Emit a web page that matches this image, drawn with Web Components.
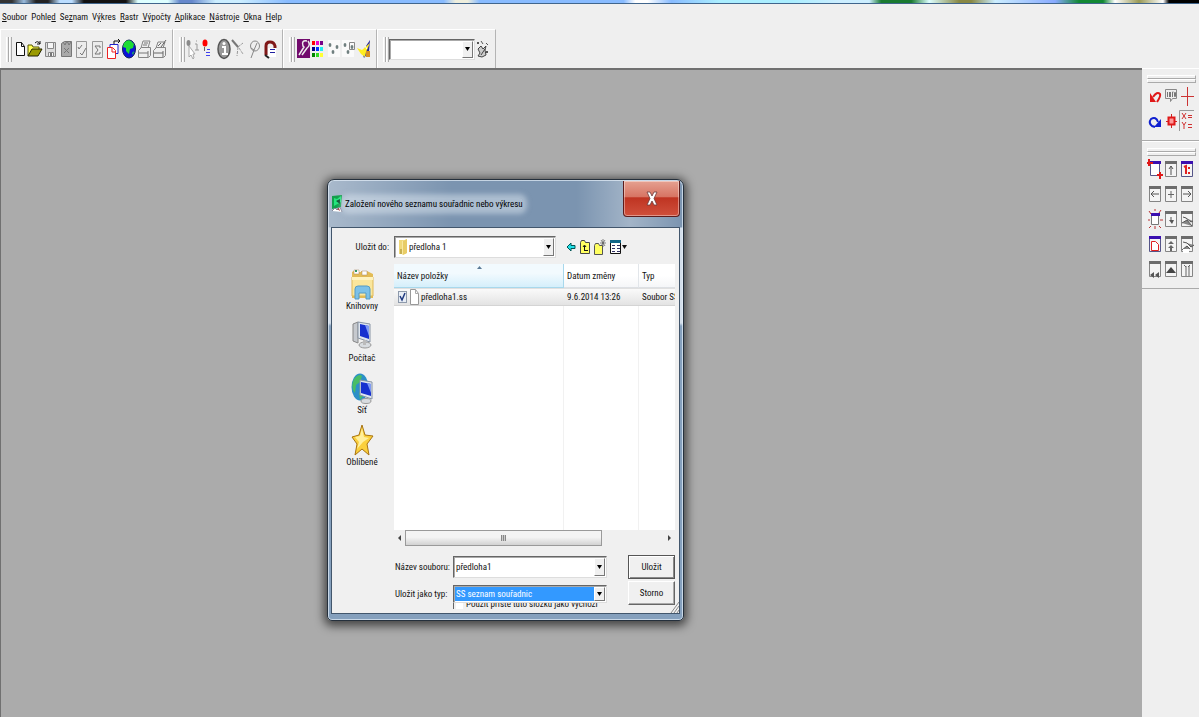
<!DOCTYPE html>
<html lang="cs">
<head>
<meta charset="utf-8">
<title>Souřadnice</title>
<style>
html,body{margin:0;height:100%}
body{font:9px/12px "Roboto Condensed","Liberation Sans",sans-serif;color:#111;background:#efefef}
</style>
</head>
<body>
<app-window></app-window>
<script>
const define=(name,html,init)=>customElements.define(name,class extends HTMLElement{
  connectedCallback(){
    if(this.shadowRoot)return;
    const t=document.createElement('template');
    t.innerHTML=typeof html==='function'?html(this):html;
    this.attachShadow({mode:'open'}).append(t.content.cloneNode(true));
    if(init)init(this);
  }
});

const page=(c,b='')=>`<path d="M2.500 3.500h10v16h-10z" fill="#ececec" stroke="${c}"/>${b}`;
const win=(b,c='#858585',t='#6c6c6c')=>`<path d="M2.500 3.500h11v15h-11z" fill="#f4f4f4" stroke="${c}"/><path d="M2 3h12v3H2z" fill="${t}"/>${b}`;
const dots='<g fill="#6f7f7f"><ellipse cx="4" cy="7" rx="1.400" ry="2"/><ellipse cx="11" cy="9" rx="1.400" ry="2"/><ellipse cx="7" cy="14" rx="1.400" ry="2"/></g>';
const ICONS={
  newdoc:'<path d="M4.500 4.500h5l3 4v9h-8z" fill="#fff" stroke="#111"/><path d="M9.500 4.500v4h3" fill="none" stroke="#111"/>',
  open:'<path d="M1 18V7h4l1 2h6v3" fill="#ffff55" stroke="#555500"/><path d="M1 18l4-7h10l-4 7z" fill="#9a9a00" stroke="#222200"/><path d="M8 5q3-3 5 1m0-3v3h-3" fill="none" stroke="#111"/>',
  save:'<path d="M2.500 4.500h10v14h-10z" fill="#ddd" stroke="#888"/><path d="M4.500 4.500h6v6h-6zM5.500 14.500h5v4h-5z" fill="#f5f5f5" stroke="#888"/><path d="M7 15h2v3H7z" fill="#777"/>',
  clip:'<path d="M2.500 5.500l3-2h7v15h-10z" fill="#aaa" stroke="#777"/><path d="M4 4l2 3 2-4 2 4 2-3M5 10l5 5m0-5l-5 5" fill="none" stroke="#777"/>',
  check:page('#999','<path d="M4 9l1 2 3-4M6 15l2 2 4-7" fill="none" stroke="#777"/>'),
  sigma:page('#999','<path d="M10 10V8H5l3 4-3 4h5v-2" fill="none" stroke="#777"/>'),
  copy:'<path d="M5 6.500h8v9H5z" fill="#fff" stroke="#2222cc"/><path d="M2.500 9.500h5l3 3v8h-8z" fill="#fff" stroke="#e22"/><path d="M7 10v4h3" fill="none" stroke="#e22"/><path d="M9 6V3h6m-2-2l2 2-2 2" fill="none" stroke="#111"/>',
  globe:'<ellipse cx="8" cy="11" rx="6.500" ry="9" fill="#0b12d8" stroke="#125"/><path d="M3 5q3-4 7-2l3 3-1 4-3 1-1 5-3-3v-3L2 9z" fill="#1edb35"/><path d="M11 15l2-2-1 4z" fill="#1edb35"/>',
  print:'<path d="M4 10l2-7h7l-2 7M1.500 12.500l3-3h9v8l-2 2h-10z" fill="#eee" stroke="#858585"/><path d="M7 5h4m-5 2h4M2 15h9m0-2v6" fill="none" stroke="#777"/>',
  print2:'<path d="M4 10l2-6h7l-2 6M1.500 12.500l3-3h9v8l-2 2h-10z" fill="#eee" stroke="#858585"/><path d="M6 8l3-3m0 4l5-7M2 15h9m0-2v6" fill="none" stroke="#666"/>',
  pick:'<ellipse cx="3.500" cy="5" rx="2" ry="3" fill="#8a8a8a"/><path d="M4 8v11l2-2 2 4 1-1-1-4h2z" fill="#fff" stroke="#aaa"/><path d="M10 6h2v6m-2 0h4M11 3h1" fill="none" stroke="#999"/>',
  reddot:'<ellipse cx="5" cy="5" rx="2.500" ry="3.500" fill="#f00"/><path d="M4.500 9v4" stroke="#666"/><path d="M7 11.500h3M6 14.500h4M6 17.500h4" stroke="#4040ee"/>',
  info:'<ellipse cx="8" cy="11" rx="6" ry="9.500" fill="#999" stroke="#555" stroke-width="1.500"/><path d="M6 9h3v7m-3 0h6" fill="none" stroke="#fff" stroke-width="2"/><circle cx="8" cy="5.500" r="1.500" fill="#fff"/>',
  net:'<path d="M2 3l5 6 5-4M7 9l-1 9M8 10l4 6" fill="none" stroke="#999" stroke-dasharray="3 1"/><path d="M1 2l6 7" stroke="#777" stroke-width="2"/>',
  lasso:'<ellipse cx="8" cy="8" rx="4.500" ry="5" fill="#eee" stroke="#888"/><path d="M4 10l3 2-3 8M7 12l3-7" fill="none" stroke="#888"/>',
  magnet:'<path d="M4 17V8q0-4 4-4t5 4v2" fill="none" stroke="#801818" stroke-width="3"/><path d="M6 10h8v9H6z" fill="#fff"/><path d="M8 11.500h5M8 14.500h5" stroke="#2020a0"/><path d="M3 17l4 3" stroke="#222" stroke-width="2"/>',
  wrench:'<path d="M2 1h13v19H2z" fill="#720b6d"/><path d="M12 3q-6-1-4 5l1 1-5 8m3 0l5-7q4-3 1-7" fill="none" stroke="#eee" stroke-width="1.500"/>',
  grid:[['#f00','#e0c','#708'],['#008','#03f','#2ee'],['#080','#3d2','#ff3']].map((r,j)=>r.map((c,i)=>`<path d="M${2+i*4} ${3+j*6}h3v4h-3z" fill="${c}"/>`).join('')).join(''),
  pts:'<path d="M2 2h12v17H2z" fill="#fafafa"/>'+dots,
  pts2:'<path d="M1 2h12v17H1z" fill="#fafafa"/>'+dots+'<path d="M8.500 4.500h5v7h-5z" fill="none" stroke="#888"/>',
  feather:'<path d="M14 2l-1 12-5 6-2-6z" fill="#2a2a9c"/><path d="M1 10l5 2 8-7-4 9-1 5-4-3z" fill="#ffee20"/><path d="M10 13h4v6h-4z" fill="#d89020"/><path d="M9 8l2 3" stroke="#fff"/>',
  gear:'<path d="M2 4l2 2m0-2l-2 2M11 13l2 2m0-2l-2 2M6 3l2 3M11 5l2 2" stroke="#555"/><path d="M3 11l3-3 2 3 3-3-1 4 1 5-4 2-4-1 2-3zM6 17l4-6" fill="#ccc" stroke="#444"/>',
  undo:'<path d="M6 12q4-6 7-3 1 2-3 8" fill="none" stroke="#e01818" stroke-width="2"/><path d="M3 8v9h6z" fill="#e01818"/>',
  redo:'<path d="M11 12q-2-6-7-3-3 4 1 7l3 1" fill="none" stroke="#1020d0" stroke-width="2"/><path d="M14 9v8H7z" fill="#1020d0"/>',
  bubble:'<path d="M2.500 4.500h11v9h-4l-2 3v-3h-5z" fill="#eee" stroke="#888"/><path d="M4.500 7v5M6.500 12V7l1 5V7M9.500 12V7h1M9 9h1M11.500 7.500h1v4h-1z" fill="none" stroke="#777"/>',
  cross:'<path d="M2 11.500h13M8.500 2v19" stroke="#c33"/>',
  target:'<path d="M3 11.500h11M8.500 4v14" stroke="#c22"/><path d="M5.500 7.500h6v7h-6z" fill="#f99" stroke="#e01818" stroke-width="2"/>',
  xy:'<path d="M.5 21V.5H15" fill="none" stroke="#999"/><path d="M3 3l4 6m0-6l-4 6M9 5.500h4M9 7.500h4M3 12l2 3 2-3M5 15v4M9 14.500h4M9 17.500h4" fill="none" stroke="#d03030"/>',
  zoomwin:'<path d="M3.500 4.500h9v13h-9z" fill="#fff" stroke="#558"/><path d="M3 3h11v3H3z" fill="#3b10b0"/><path d="M2 1v7M0 5h6M13 14v7M10 17h6" stroke="#e01818" stroke-width="2"/>',
  up:win('<path d="M8 8v9M6 11l2-3 2 3" stroke="#555" fill="none"/>'),
  one:win('<path d="M5 9l2-1v8M10 9v2M10 14v2" fill="none" stroke="#e02020" stroke-width="2"/>','#558','#3b10b0'),
  left:win('<path d="M4 11h8M7 8l-3 3 3 3" stroke="#555" fill="none"/>'),
  plus:win('<path d="M5 11.500h6M8 8v7" stroke="#666"/>'),
  right:win('<path d="M4 11h8M9 8l3 3-3 3" stroke="#555" fill="none"/>'),
  sun:'<path d="M4.500 7.500h7v9h-7z" fill="#fff" stroke="#777"/><path d="M4 5h9v3H4z" fill="#3b10b0"/><path d="M2 3l2 3M14 2l-2 3M1 12h2M13 12h3M8 1v2M8 18v3M2 20l2-2M14 20l-2-2" stroke="#b33"/>',
  down:win('<path d="M8 9v4" stroke="#555"/><path d="M6 12h5l-2 4z" fill="#555"/>'),
  hand:win('<path d="M4 9l3 1 5 4 2-1M3 15l5-3 5 6" fill="#888" stroke="#555"/>'),
  redpage:win('<path d="M4.500 8.500h4l3 3v6h-7z" fill="#fff" stroke="#e02020"/>','#558','#3b10b0'),
  tree:win('<path d="M5 11l3-3 3 3zM5 15l3-3 3 3zM7 15h2v3H7z" fill="#666"/>'),
  hand2:win('<path d="M4 9l4 1 4 4 3-2M3 17l5-4 3 3" fill="#888" stroke="#555"/><path d="M4 16h6v4H4z" fill="#fff"/>'),
  rew:win('<path d="M3 17l4-3v6zM8 17l4-3v6z" fill="#555"/>'),
  tri:win('<path d="M3 15l5-6 5 6z" fill="#444"/>'),
  gift:win('<path d="M7 8v10M10 8v10M5 7l2 2M11 7l-2 2" stroke="#666"/>'),
  title:'<path d="M1 2l10-1-1 12-9 2z" fill="#12a04c"/><path d="M3 4l3 1 4-3v6l-7 4z" fill="#25e67d"/><path d="M5 7l4-2v5z" fill="#0b5030"/><path d="M1 17l3-3 2 2 3-3 2 5" fill="#fff" stroke="#889"/><path d="M6 15l2-1 1 3z" fill="#a33"/>',
  folder:'<path d="M1 2h7v14H1z" fill="#f0d878"/><path d="M4 3l5-2v14l-5 2z" fill="#f8e8a0"/><path d="M5 3l4-2v14l-4 2z" fill="#e8cc66"/><path d="M2 11h2v5H2z" fill="#c8b050"/>',
  file:'<path d="M.5.500h5l3 4v11h-8z" fill="#fff" stroke="#999"/><path d="M5.500.500v4h3" fill="none" stroke="#aaa"/>',
  back:'<path d="M1 8l4-4v2.500h4v3H5V12z" fill="#20e0e8" stroke="#055"/>',
  updir:'<path d="M.5 3.500l1-2h3l1 2h4v11h-9z" fill="#ffff60" stroke="#444"/><path d="M4.500 12V7M3 8l1.500-2L6 8M4 11.500h4" fill="none" stroke="#111"/>',
  newdir:'<path d="M.5 6.500l1-2h3l1 2h3v9h-8z" fill="#ffff60" stroke="#555"/><path d="M9 0v8M6 4h6M7 1l4 6M11 1l-4 6" stroke="#555" stroke-width=".7"/>',
  views:'<path d="M.5 1.500h10v13h-10z" fill="#fff" stroke="#111"/><path d="M0 1h11v3H0z" fill="#168"/><path d="M2 6.500h3M7 6.500h3M2 9.500h3M7 9.500h3M2 12.500h3M7 12.500h3" stroke="#336"/><path d="M12 6h5l-2.500 4z" fill="#111"/>',
  libs:'<path d="M1 4q3-3 6 0h3V3h6l6 3v24H1z" fill="#e3bc55"/><path d="M3 2h5v4H3zM11 3h5v4h-5z" fill="#fff" stroke="#a86" stroke-width=".5"/><path d="M4 2h2v2H4z" fill="#396"/><path d="M1 9h21v19H1z" fill="#fae69c" stroke="#dfb959"/><path d="M1 9h21v3H1z" fill="#fff3be"/><path d="M4 31V21q0-3 3-3h9q3 0 3 3v10h-4v-6H8v6z" fill="#7cc1e8" stroke="#559bc5"/>',
  pc:'<path d="M2 4l5-2v21l-5-2z" fill="#c6c9ce" stroke="#888"/><path d="M7 2l12 2v18L7 18z" fill="#dfe6ef" stroke="#8894a4"/><path d="M9 4l9 2v13l-9-3z" fill="#1730cf"/><path d="M14 5l4 1v10z" fill="#7f9bf5"/><ellipse cx="14" cy="25" rx="6" ry="3" fill="#d8dce0" stroke="#999"/><path d="M12 20h3v5h-3z" fill="#bbb"/>',
  lan:'<ellipse cx="9" cy="15" rx="8.500" ry="13.500" fill="#2c90c8"/><path d="M3 7q5-6 8-3l-2 6-4 3-1 8q-5-6-1-14zM8 20l4 4-3 4z" fill="#48bd66"/><path d="M9 8l12 2v17L9 23z" fill="#dfe6ef" stroke="#8894a4"/><path d="M10 10l10 2v12l-10-3z" fill="#1730cf"/><path d="M16 11l4 1v9z" fill="#7f9bf5"/><ellipse cx="15" cy="29" rx="5" ry="2.500" fill="#d8dce0" stroke="#999"/>',
  star:'<path d="M11 1l3 10 8 1-6 8 2 11-7-6-7 6 2-11-5-7 7-2z" fill="#fbd03c" stroke="#a87412"/><path d="M11 4l2 9 5 1-6 4-6 7 2-7-4-5 5-1z" fill="#ffef9c"/>'
};
const SIZE={title:[12,20],folder:[10,18],file:[9,16],back:[10,16],updir:[10,16],newdir:[12,16],views:[18,16],libs:[23,32],pc:[23,32],lan:[23,32],star:[23,32]};

define('win-icon',el=>{
  const n=el.getAttribute('name'),[w,h]=SIZE[n]||[16,22];
  return `<style>:host{display:block;flex:none}svg{display:block}</style><svg width="${w}" height="${h}" viewBox="0 0 ${w} ${h}" aria-hidden="true">${ICONS[n]}</svg>`;
});

define('icon-button',el=>`<style>
:host{display:flex;justify-content:center;align-items:center;min-width:0}
button{all:unset;display:block;cursor:default}
</style><button type="button" aria-label="${el.getAttribute('icon')}"><win-icon name="${el.getAttribute('icon')}"></win-icon></button>`);

define('menu-bar',`<style>
:host{display:block}
nav{display:flex;gap:4px;height:25px;align-items:center;padding-left:2px}
button{all:unset;cursor:default}
</style><nav>${['<u>S</u>oubor','Pohle<u>d</u>','Se<u>z</u>nam','V<u>ý</u>kres','<u>R</u>astr','<u>V</u>ýpočty','<u>A</u>plikace','<u>N</u>ástroje','<u>O</u>kna','<u>H</u>elp'].map(t=>`<button type="button">${t}</button>`).join('')}</nav>`);

define('tool-group',`<style>
:host{display:flex;align-items:center;box-sizing:border-box;height:39px;padding:0 4px 0 5px;border-top:1px solid #fff;border-left:1px solid #fff;border-right:1px solid #b4b4b4}
i{width:1px;height:25px;border-left:1px solid #fff;border-right:1px solid #aaa;flex:none}
div{flex:1;display:grid;grid-auto-flow:column;grid-auto-columns:minmax(0,1fr);align-items:center}
:host([field]) div{grid-template-columns:minmax(0,1fr) 16px}
</style><i></i><i></i><div><slot></slot></div>`);

/* One labelled field: a drop-down, or with "edit" an editable combo. */
define('win-field',el=>{
  const v=el.getAttribute('value'),l=el.getAttribute('label'),ic=el.getAttribute('icon'),edit=el.hasAttribute('edit'),bare=el.hasAttribute('nolabel');
  const a=bare?`aria-label="${l}"`:'';
  return `<style>
:host{display:flex;align-items:center;min-width:0}
label{flex:none;width:var(--label,0);box-sizing:border-box;text-align:var(--align,left);padding-right:var(--gap,0);white-space:nowrap}
.box{flex:1;min-width:0;display:flex;align-items:stretch;box-sizing:border-box;height:var(--h,22px);background:#fff;border:1px solid;border-color:#666 #ddd #ddd #666;box-shadow:inset 1px 1px #aaa;padding:1px}
win-icon{align-self:center;margin-left:2px}
select,input{appearance:none;flex:1;min-width:0;border:0;outline:0;margin:0;border-radius:0;padding:0 0 0 1px;font:inherit;color:var(--ink,#111);background:var(--fill,transparent)}
.arrow{flex:none;width:9px;display:flex;align-items:center;justify-content:center;background:#f0f0f0;border:1px solid;border-color:#fff #777 #777 #fff;pointer-events:none}
</style>${bare?'':`<label for="c">${l}</label>`}<div class="box">${ic?`<win-icon name="${ic}"></win-icon>`:''}${edit?`<input id="c" ${a} value="${v}">`:`<select id="c" ${a}><option>${v}</option></select>`}<span class="arrow"><svg width="5" height="4" viewBox="0 0 5 4"><path d="M0 0h5L2.500 4z" fill="#000"/></svg></span></div>`;
});

define('push-button',`<style>
:host{display:block}
button{display:block;width:100%;height:24px;font:inherit;color:inherit;padding:0;border-radius:0;background:#f0f0f0;border:1px solid;border-color:#fff #666 #666 #fff;box-shadow:inset -1px -1px #aaa}
:host([default]) button{border-color:#555;box-shadow:inset 1px 1px #fff,inset -1px -1px #888}
</style><button type="button"><slot></slot></button>`);

define('dock-group',`<style>
:host{display:block;padding:6px 3px 7px 5px;border-top:1px solid #fff;border-bottom:1px solid #aaa}
i{display:block;height:2px;border:1px solid;border-color:#fff #aaa #aaa #fff}
div{display:grid;grid-template-columns:repeat(3,16px);grid-auto-rows:25px}
</style><i></i><i></i><div><slot></slot></div>`);

const btns=s=>s.split(' ').map(n=>`<icon-button icon="${n}"></icon-button>`).join('');

define('place-item',el=>`<style>
:host{display:block}
button{all:unset;display:flex;flex-direction:column;align-items:center;width:100%;height:52px;cursor:default}
</style><button type="button"><win-icon name="${el.getAttribute('icon')}"></win-icon><span><slot></slot></span></button>`);

define('file-list',`<style>
:host{display:flex;flex-direction:column;min-width:0;height:282px}
.view{flex:1;overflow:hidden;background:linear-gradient(90deg,transparent 169px,#f1f1f1 169px 170px,transparent 170px 244px,#f1f1f1 244px 245px,transparent 245px) #fff}
table{border-collapse:separate;border-spacing:0;table-layout:fixed;width:100%}
th,td{padding:0 3px;font-weight:400;text-align:left;white-space:nowrap;overflow:hidden}
th{height:24px;border-right:1px solid #e2e6ea;border-bottom:1px solid #dde0e4;background:linear-gradient(#fff 50%,#f5f6f8);position:relative;box-sizing:border-box}
th.sorted{background:linear-gradient(#f2fafe 40%,#d5effb);border-color:#a8d8ec}
th svg{position:absolute;top:2px;left:83px}
th:last-child,td:last-child{padding-right:0;border-right:0}
td{height:16px;border-top:1px solid #e0e0e0;border-bottom:1px solid #d4d4d4;background:linear-gradient(#fafafa,#e3e3e3)}
.name{display:flex;align-items:center;gap:2px;padding-left:1px}
input{appearance:none;flex:none;margin:0 1px 0 0;width:9px;height:12px;border:1px solid #8e9aab;background:#e8eef6 url("data:image/svg+xml,%3Csvg xmlns='http://www.w3.org/2000/svg' viewBox='0 0 7 10'%3E%3Cpath d='M1 4l2 4 3-7' fill='none' stroke='%23203a80' stroke-width='1.500'/%3E%3C/svg%3E") center/contain no-repeat}
.bar{display:flex;height:16px;align-items:center;background:#f0f0f0}
.bar svg{flex:none;margin:0 3px}
.track{flex:1;display:flex;height:16px}
.thumb{flex:0 0 76%;box-sizing:border-box;border:1px solid #9a9a9a;background:linear-gradient(#f4f4f4 45%,#d2d2d2);display:flex;align-items:center;justify-content:center}
.thumb:after{content:"";width:5px;height:6px;background:repeating-linear-gradient(90deg,#888 0 1px,#ccc 1px 2px)}
</style>
<div class="view"><table>
<colgroup><col style="width:170px"><col style="width:75px"><col></colgroup>
<thead><tr><th class="sorted">Název položky<svg width="5" height="3" viewBox="0 0 5 3"><path d="M0 3L2.500 0 5 3z" fill="#5a7a96"/></svg></th><th>Datum změny</th><th>Typ</th></tr></thead>
<tbody>
<tr><td><span class="name"><input type="checkbox" id="f1" checked><win-icon name="file"></win-icon><label for="f1">předloha1.ss</label></span></td><td>9.6.2014 13:26</td><td>Soubor SS</td></tr></tbody>
</table></div>
<div class="bar"><svg width="5" height="6" viewBox="0 0 5 6"><path d="M4 0v6L1 3z" fill="#444"/></svg><div class="track"><div class="thumb"></div></div><svg width="5" height="6" viewBox="0 0 5 6"><path d="M1 0v6l3-3z" fill="#444"/></svg></div>`);

define('save-dialog',`<style>
:host{display:block;box-sizing:border-box;width:357px;border:1px solid #25303c;border-radius:7px 7px 5px 5px;padding:0 3px 6px;
background:linear-gradient(90deg,rgba(255,255,255,.35),transparent 35% 70%,rgba(255,255,255,.3) 85%,transparent) 0 0/100% 48px no-repeat,linear-gradient(#7b94b0 0 47px,#d3deea 48px 143px,#85a0bd 146px);
box-shadow:inset 0 0 0 1px rgba(230,240,250,.7),0 2px 10px 3px rgba(0,0,0,.6)}
header{display:flex;height:47px;align-items:flex-start}
h1{flex:1;display:flex;align-items:center;gap:2px;height:47px;margin:0;font:inherit;color:#000;white-space:nowrap}
h1 span{background:rgba(220,230,240,.5);box-shadow:0 0 5px 4px rgba(220,230,240,.5);border-radius:4px}
.close{width:57px;height:36px;margin:1px 0 0;padding:0;border:1px solid #5d1c1c;border-top:0;border-radius:0 0 4px 4px;background:linear-gradient(#e5a191,#d77463 45%,#bf3422 48%,#d0503c);box-shadow:inset 0 0 0 1px rgba(255,255,255,.4)}
.close svg{display:block;margin:auto}
main{border:1px solid #42566c;background:#f0f0f0;padding:8px 4px 4px 0;position:relative}
.look{display:flex;align-items:center}
.look win-field{width:224px;--label:62px;--align:right;--gap:5px}
.nav{display:flex;gap:4px;margin-left:10px}
.body{display:grid;grid-template-columns:62px minmax(0,1fr);margin-top:6px}
.places{padding-top:4px;padding-right:2px}
.form{display:grid;grid-template-columns:212px 47px;justify-content:space-between;padding-left:63px;margin-top:9px;row-gap:2px}
.form win-field{--label:58px}
.type{padding-top:4px}
.type win-field{--h:18px;--fill:#3399ff;--ink:#fff;position:relative;z-index:1}
.again{display:flex;align-items:flex-end;gap:3px;height:6px;overflow:hidden;margin-left:58px;padding-left:2px;border-left:1px solid #666;white-space:nowrap}
.again input{appearance:none;margin:0;width:7px;height:12px;background:#fff}
.again label{line-height:10px}
.grip{position:absolute;right:0;bottom:0}
</style>
<header><h1><win-icon name="title"></win-icon><span>Založení nového seznamu souřadnic nebo výkresu</span></h1>
<button class="close" type="button" aria-label="Zavřít"><svg width="12" height="15" viewBox="0 0 12 15"><path d="M1 1h3l2 4 2-4h3L8 7.500 11 14H8L6 10l-2 4H1l3-6.500z" fill="#fff" stroke="#6b3a3a" stroke-width=".8"/></svg></button></header>
<main>
<div class="look"><win-field label="Uložit do:" value="předloha 1" icon="folder"></win-field><div class="nav">${btns('back updir newdir views')}</div></div>
<div class="body"><div class="places"><place-item icon="libs">Knihovny</place-item><place-item icon="pc">Počítač</place-item><place-item icon="lan">Síť</place-item><place-item icon="star">Oblíbené</place-item></div><file-list></file-list></div>
<div class="form">
<win-field label="Název souboru:" value="předloha1" edit></win-field><push-button default>Uložit</push-button>
<div class="type"><win-field label="Uložit jako typ:" value="SS seznam souřadnic"></win-field><div class="again"><input type="checkbox" id="again"><label for="again">Použít příště tuto složku jako výchozí</label></div></div><push-button>Storno</push-button>
</div>
<svg class="grip" width="9" height="12" viewBox="0 0 9 12"><path d="M1 12L9 1M4 12l5-7M7 12l2-3" stroke="#888"/></svg>
</main>`);

define('app-window',`<style>
:host{display:flex;flex-direction:column;height:100vh;overflow:hidden;background:#efefef}
.strip{flex:none;height:3px;border-bottom:1px solid #40658c;background:linear-gradient(90deg,#333 0 1%,#9bd 2%,#222 3% 4%,#bdf 5% 6%,#111 7% 10.500%,#dff 11.500% 14%,#68c 15% 16%,#cef 18% 20%,#8bf 24% 37%,#eed 38% 39%,#8bf 40% 52%,#fff 53% 54%,#8bf 56%,#aef 60% 66%,#cef 70%,#cef 72.500%,#197a30 73.500% 76%,#dff 77.500%,#884 80% 81%,#cef 83%,#8af 88%,#183 90% 92%,#fff 93%,#995 95%,#fff 97%,#000 97.500%)}
.tools{flex:none;display:flex}
.g1{width:173px}.g2{width:110px}.g3{width:94px}.g4{width:119px;--h:21px}
.work{flex:1;display:flex;min-height:0}
.desk{flex:1;position:relative;background:#ababab;border-top:2px solid #707070;border-left:1px solid #707070;box-sizing:border-box;overflow:hidden}
save-dialog{position:absolute;left:326px;top:109px}
aside{flex:none;width:57px;background:#efefef}
</style>
<div class="strip"></div>
<menu-bar></menu-bar>
<div class="tools">
<tool-group class="g1">${btns('newdoc open save clip check sigma copy globe print print2')}</tool-group>
<tool-group class="g2">${btns('pick reddot info net lasso magnet')}</tool-group>
<tool-group class="g3">${btns('wrench grid pts pts2 feather')}</tool-group>
<tool-group class="g4" field><win-field label="Výběr" nolabel value=""></win-field><icon-button icon="gear"></icon-button></tool-group>
</div>
<div class="work"><div class="desk"><save-dialog></save-dialog></div>
<aside><dock-group>${btns('undo bubble cross redo target xy')}</dock-group><dock-group>${btns('zoomwin up one left plus right sun down hand redpage tree hand2 rew tri gift')}</dock-group></aside></div>`);
</script>
</body>
</html>
